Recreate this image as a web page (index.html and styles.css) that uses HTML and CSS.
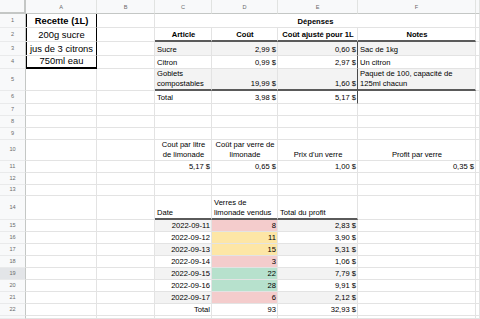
FILE: index.html
```html
<!DOCTYPE html>
<html lang="fr">
<head>
<meta charset="utf-8">
<title>Limonade</title>
<link rel="stylesheet" href="styles.css">
</head>
<body>
<div class="sheet">
  <!-- header row -->
  <div class="corner"></div>
  <div class="ch">A</div><div class="ch">B</div><div class="ch">C</div><div class="ch">D</div><div class="ch">E</div><div class="ch">F</div><div class="ch"></div>

  <!-- row 1 -->
  <div class="rh">1</div>
  <div class="c ctr big box bold"><span>Recette (1L)</span></div>
  <div class="c"></div>
  <div class="c ctr bold span4"><span>Dépenses</span></div>
  <div class="c"></div>

  <!-- row 2 -->
  <div class="rh">2</div>
  <div class="c ctr big box"><span>200g sucre</span></div>
  <div class="c"></div>
  <div class="c ctr bold thb"><span>Article</span></div>
  <div class="c ctr bold thb"><span>Coût</span></div>
  <div class="c ctr bold thb"><span>Coût ajusté pour 1L</span></div>
  <div class="c ctr bold thb"><span>Notes</span></div>
  <div class="c"></div>

  <!-- row 3 -->
  <div class="rh">3</div>
  <div class="c ctr big box"><span>jus de 3 citrons</span></div>
  <div class="c"></div>
  <div class="c g"><span>Sucre</span></div>
  <div class="c g r"><span>2,99 $</span></div>
  <div class="c g r vr"><span>0,60 $</span></div>
  <div class="c g"><span>Sac de 1kg</span></div>
  <div class="c"></div>

  <!-- row 4 -->
  <div class="rh">4</div>
  <div class="c ctr big box boxb"><span>750ml eau</span></div>
  <div class="c"></div>
  <div class="c"><span>Citron</span></div>
  <div class="c r"><span>0,99 $</span></div>
  <div class="c r vr"><span>2,97 $</span></div>
  <div class="c"><span>Un citron</span></div>
  <div class="c"></div>

  <!-- row 5 -->
  <div class="rh">5</div>
  <div class="c"></div>
  <div class="c"></div>
  <div class="c g thb"><span>Goblets<br>compostables</span></div>
  <div class="c g r thb"><span>19,99 $</span></div>
  <div class="c g r vr thb"><span>1,60 $</span></div>
  <div class="c g thb"><span>Paquet de 100, capacité de<br>125ml chacun</span></div>
  <div class="c"></div>

  <!-- row 6 -->
  <div class="rh">6</div>
  <div class="c"></div>
  <div class="c"></div>
  <div class="c"><span>Total</span></div>
  <div class="c r"><span>3,98 $</span></div>
  <div class="c r vr"><span>5,17 $</span></div>
  <div class="c"></div>
  <div class="c"></div>

  <!-- rows 7-9 -->
  <div class="rh">7</div><div class="c"></div><div class="c"></div><div class="c"></div><div class="c"></div><div class="c"></div><div class="c"></div><div class="c"></div>
  <div class="rh">8</div><div class="c"></div><div class="c"></div><div class="c"></div><div class="c"></div><div class="c"></div><div class="c"></div><div class="c"></div>
  <div class="rh">9</div><div class="c"></div><div class="c"></div><div class="c"></div><div class="c"></div><div class="c"></div><div class="c"></div><div class="c"></div>

  <!-- row 10 -->
  <div class="rh">10</div>
  <div class="c"></div>
  <div class="c"></div>
  <div class="c ctr"><span>Cout par litre<br>de limonade</span></div>
  <div class="c ctr"><span>Coût par verre de<br>limonade</span></div>
  <div class="c ctr"><span>Prix d'un verre</span></div>
  <div class="c ctr"><span>Profit par verre</span></div>
  <div class="c"></div>

  <!-- row 11 -->
  <div class="rh">11</div>
  <div class="c"></div>
  <div class="c"></div>
  <div class="c r"><span>5,17 $</span></div>
  <div class="c r"><span>0,65 $</span></div>
  <div class="c r"><span>1,00 $</span></div>
  <div class="c r"><span>0,35 $</span></div>
  <div class="c"></div>

  <!-- rows 12-13 -->
  <div class="rh">12</div><div class="c"></div><div class="c"></div><div class="c"></div><div class="c"></div><div class="c"></div><div class="c"></div><div class="c"></div>
  <div class="rh">13</div><div class="c"></div><div class="c"></div><div class="c"></div><div class="c"></div><div class="c"></div><div class="c"></div><div class="c"></div>

  <!-- row 14 -->
  <div class="rh">14</div>
  <div class="c"></div>
  <div class="c"></div>
  <div class="c thb"><span>Date</span></div>
  <div class="c thb"><span>Verres de<br>limonade vendus</span></div>
  <div class="c thb"><span>Total du profit</span></div>
  <div class="c"></div>
  <div class="c"></div>

  <!-- row 15 -->
  <div class="rh">15</div><div class="c"></div><div class="c"></div>
  <div class="c g r"><span>2022-09-11</span></div>
  <div class="c pink r"><span>8</span></div>
  <div class="c g r"><span>2,83 $</span></div>
  <div class="c"></div><div class="c"></div>

  <!-- row 16 -->
  <div class="rh">16</div><div class="c"></div><div class="c"></div>
  <div class="c r"><span>2022-09-12</span></div>
  <div class="c yellow r"><span>11</span></div>
  <div class="c r"><span>3,90 $</span></div>
  <div class="c"></div><div class="c"></div>

  <!-- row 17 -->
  <div class="rh">17</div><div class="c"></div><div class="c"></div>
  <div class="c g r"><span>2022-09-13</span></div>
  <div class="c yellow r"><span>15</span></div>
  <div class="c g r"><span>5,31 $</span></div>
  <div class="c"></div><div class="c"></div>

  <!-- row 18 -->
  <div class="rh">18</div><div class="c"></div><div class="c"></div>
  <div class="c r"><span>2022-09-14</span></div>
  <div class="c pink r"><span>3</span></div>
  <div class="c r"><span>1,06 $</span></div>
  <div class="c"></div><div class="c"></div>

  <!-- row 19 -->
  <div class="rh sel">19</div><div class="c"></div><div class="c"></div>
  <div class="c g r"><span>2022-09-15</span></div>
  <div class="c green r"><span>22</span></div>
  <div class="c g r"><span>7,79 $</span></div>
  <div class="c"></div><div class="c"></div>

  <!-- row 20 -->
  <div class="rh">20</div><div class="c"></div><div class="c"></div>
  <div class="c r"><span>2022-09-16</span></div>
  <div class="c green r"><span>28</span></div>
  <div class="c r"><span>9,91 $</span></div>
  <div class="c"></div><div class="c"></div>

  <!-- row 21 -->
  <div class="rh">21</div><div class="c"></div><div class="c"></div>
  <div class="c g r"><span>2022-09-17</span></div>
  <div class="c pink r"><span>6</span></div>
  <div class="c g r"><span>2,12 $</span></div>
  <div class="c"></div><div class="c"></div>

  <!-- row 22 -->
  <div class="rh">22</div><div class="c"></div><div class="c"></div>
  <div class="c r"><span>Total</span></div>
  <div class="c r"><span>93</span></div>
  <div class="c r"><span>32,93 $</span></div>
  <div class="c"></div><div class="c"></div>

  <!-- row 23 (partially visible) -->
  <div class="rh"></div><div class="c"></div><div class="c"></div><div class="c"></div><div class="c"></div><div class="c"></div><div class="c"></div><div class="c"></div>
</div>
</body>
</html>
```

FILE: styles.css
```css
html, body {
  margin: 0;
  padding: 0;
  background: #fff;
  overflow: hidden;
}
body {
  width: 480px;
  height: 319px;
  font-family: "Liberation Sans", Arial, sans-serif;
  color: #000;
}
.sheet {
  display: grid;
  grid-template-columns: 26px 71px 58px 57px 66px 80px 118px 4px;
  grid-template-rows: 14px 14px 14px 14px 13px 22px 13px 12px 12px 12px 21px 12px 12px 11px 24px 12px 12px 12px 12px 12px 12px 12px 12px 3px;
  width: 480px;
  height: 319px;
  overflow: hidden;
}
.sheet > div {
  box-sizing: border-box;
  min-width: 0;
  overflow: hidden;
}
.corner {
  background: #f8f9fa;
  border-right: 2px solid #c4c7c5;
  border-bottom: 2px solid #c4c7c5;
}
.ch {
  background: #f8f9fa;
  border-right: 1px solid #e1e3e1;
  border-bottom: 1px solid #c4c7c5;
  font-size: 5.6px;
  color: #6b6b6b;
  display: flex;
  align-items: center;
  justify-content: center;
}
.rh {
  background: #f8f9fa;
  border-right: 1px solid #c4c7c5;
  border-bottom: 1px solid #e9eaeb;
  font-size: 5.6px;
  color: #6b6b6b;
  display: flex;
  align-items: center;
  justify-content: center;
  padding-bottom: 2px;
}
.rh.sel {
  background: #e3e5e8;
}
.c {
  border-right: 1px solid #e3e3e3;
  border-bottom: 1px solid #e3e3e3;
  font-size: 7.6px;
  line-height: 9.4px;
  display: flex;
  align-items: flex-end;
  justify-content: flex-start;
  padding: 0 1px 1px 2px;
  white-space: nowrap;
}
.c > span {
  display: block;
}
.r {
  justify-content: flex-end;
  text-align: right;
}
.ctr {
  justify-content: center;
  text-align: center;
}
.bold {
  font-weight: bold;
}
.big {
  font-size: 9.4px;
  line-height: 11px;
  padding-bottom: 1px;
}
.span4 {
  grid-column: span 4;
}
.box {
  border-right: 1px solid #000;
  box-shadow: inset 1px 0 0 #000;
}
.boxb {
  border-bottom: 2px solid #000;
}
.thb {
  border-bottom: 2px solid #5a5a5a;
}
.vr {
  border-right: 1px solid #4a4a4a;
}
.g {
  background: #f3f3f3;
}
.pink {
  background: #f4cccc;
}
.yellow {
  background: #fde6a6;
}
.green {
  background: #b7e1cd;
}
```
